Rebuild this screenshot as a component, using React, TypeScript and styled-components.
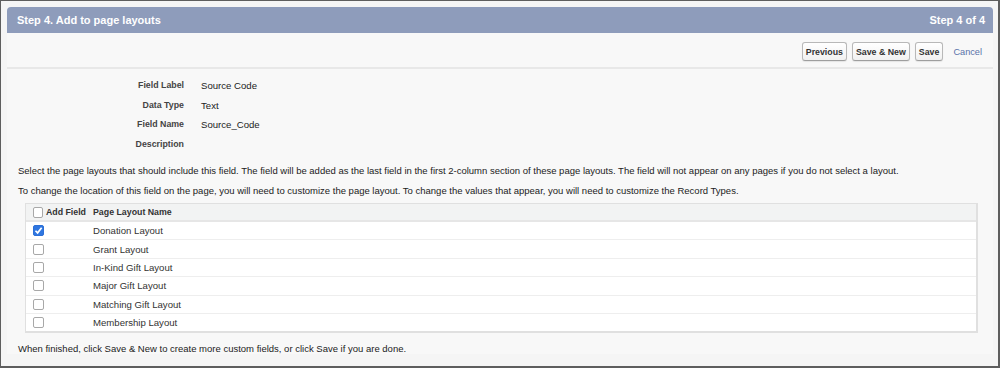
import React from "react";
import styled, { createGlobalStyle } from "styled-components";

const GlobalStyle = createGlobalStyle`
  html, body {
    margin: 0;
    padding: 0;
    background: #f5f5f5;
  }
  body {
    font-family: Arial, "Liberation Sans", Helvetica, sans-serif;
    color: #222;
  }
`;

const Frame = styled.div`
  width: 1000px;
  height: 368px;
  box-sizing: border-box;
  border: 1px solid #5e5e5e;
  border-right-width: 2px;
  border-bottom-width: 2px;
  background: #f5f5f5;
  padding: 6px 5px 0 6px;
  overflow: hidden;
`;

const Panel = styled.div`
  background: #f8f8f8;
  border-radius: 4px 4px 0 0;
`;

const Header = styled.div`
  height: 26px;
  display: flex;
  align-items: center;
  justify-content: space-between;
  padding: 0 8px 0 10px;
  background: #8e9cbb;
  border-radius: 4px 4px 0 0;
  color: #fff;
  font-size: 11px;
  font-weight: bold;
`;

const ButtonBar = styled.div`
  display: flex;
  justify-content: flex-end;
  align-items: center;
  gap: 5px;
  padding: 9px 11px 6px;
  border-bottom: 2px solid #e8e8e8;
`;

const Button = styled.button`
  height: 19px;
  padding: 0 3px;
  font-family: Arial, "Liberation Sans", sans-serif;
  font-size: 8.8px;
  font-weight: bold;
  color: #333;
  background: linear-gradient(#ffffff, #f1f1f1);
  border: 1px solid #b8b8b8;
  border-bottom-color: #9e9e9e;
  border-radius: 3px;
  box-shadow: 0 1px 1px rgba(0, 0, 0, 0.08);
`;

const CancelLink = styled.a`
  margin-left: 5px;
  font-size: 9.2px;
  color: #5872a8;
  text-decoration: none;
`;

const FieldGrid = styled.div`
  display: grid;
  grid-template-columns: 177px 1fr;
  column-gap: 17px;
  padding: 7px 0 7px;
`;

const FieldLabel = styled.div`
  height: 19.5px;
  line-height: 19.5px;
  text-align: right;
  font-size: 8.8px;
  font-weight: bold;
  color: #444;
`;

const FieldValue = styled.div`
  height: 19.5px;
  line-height: 19.5px;
  font-size: 9.6px;
  color: #222;
`;

const Body = styled.div`
  padding: 0 0 0 11px;
`;

const Note = styled.p`
  margin: 0;
  height: 20px;
  line-height: 20px;
  font-size: 9.5px;
  color: #222;
`;

const Table = styled.div`
  margin: 2px 15px 0 7px;
  background: #fff;
  border: 1px solid #e0e0e0;
  border-right-width: 2px;
  border-bottom-width: 2px;
`;

const Row = styled.div<{ head?: boolean }>`
  display: grid;
  grid-template-columns: 60px 1fr;
  align-items: center;
  height: ${(p) => (p.head ? "16px" : "17.4px")};
  background: ${(p) => (p.head ? "#f2f3f3" : "#fff")};
  border-bottom: ${(p) => (p.head ? "2px solid #e6e6e6" : "1px solid #eeeeee")};
  &:last-child {
    border-bottom: none;
  }
`;

const CheckCell = styled.div`
  display: flex;
  align-items: center;
  gap: 3px;
  padding-left: 7px;
  white-space: nowrap;
  font-size: 8.8px;
  font-weight: bold;
  color: #333;
`;

const Box = styled.span<{ checked?: boolean }>`
  width: 11px;
  height: 11px;
  box-sizing: border-box;
  border-radius: 2px;
  border: 1px solid ${(p) => (p.checked ? "#2c6fd6" : "#a8a8a8")};
  background: ${(p) => (p.checked ? "#2f76e0" : "#fff")};
  display: inline-flex;
  align-items: center;
  justify-content: center;
`;

const NameCell = styled.div<{ head?: boolean }>`
  font-size: ${(p) => (p.head ? "8.8px" : "9.6px")};
  font-weight: ${(p) => (p.head ? "bold" : "normal")};
  color: #333;
  padding-left: 7px;
`;

const Footer = styled.p`
  margin: 0;
  padding: 10px 0 0 0;
  font-size: 9.5px;
  color: #222;
`;

const Checkbox = ({ checked }: { checked?: boolean }) => (
  <Box checked={checked}>
    {checked && (
      <svg width="9" height="9" viewBox="0 0 8 8">
        <path d="M1.3 4.2 L3.2 6.1 L6.8 1.6" fill="none" stroke="#fff" strokeWidth="1.5" />
      </svg>
    )}
  </Box>
);

const fields = [
  { label: "Field Label", value: "Source Code" },
  { label: "Data Type", value: "Text" },
  { label: "Field Name", value: "Source_Code" },
  { label: "Description", value: "" },
];

const layouts = [
  { name: "Donation Layout", checked: true },
  { name: "Grant Layout", checked: false },
  { name: "In-Kind Gift Layout", checked: false },
  { name: "Major Gift Layout", checked: false },
  { name: "Matching Gift Layout", checked: false },
  { name: "Membership Layout", checked: false },
];

export default function App() {
  return (
    <>
      <GlobalStyle />
      <Frame>
        <Panel>
          <Header>
            <span>Step 4. Add to page layouts</span>
            <span>Step 4 of 4</span>
          </Header>
          <ButtonBar>
            <Button>Previous</Button>
            <Button>Save &amp; New</Button>
            <Button>Save</Button>
            <CancelLink href="#">Cancel</CancelLink>
          </ButtonBar>
          <FieldGrid>
            {fields.map((f) => (
              <React.Fragment key={f.label}>
                <FieldLabel>{f.label}</FieldLabel>
                <FieldValue>{f.value}</FieldValue>
              </React.Fragment>
            ))}
          </FieldGrid>
          <Body>
            <Note>
              Select the page layouts that should include this field. The field will be added as the last field in the first
              2-column section of these page layouts. The field will not appear on any pages if you do not select a layout.
            </Note>
            <Note>
              To change the location of this field on the page, you will need to customize the page layout. To change the
              values that appear, you will need to customize the Record Types.
            </Note>
            <Table>
              <Row head>
                <CheckCell>
                  <Checkbox />
                  Add Field
                </CheckCell>
                <NameCell head>Page Layout Name</NameCell>
              </Row>
              {layouts.map((l) => (
                <Row key={l.name}>
                  <CheckCell>
                    <Checkbox checked={l.checked} />
                  </CheckCell>
                  <NameCell>{l.name}</NameCell>
                </Row>
              ))}
            </Table>
            <Footer>When finished, click Save &amp; New to create more custom fields, or click Save if you are done.</Footer>
          </Body>
        </Panel>
      </Frame>
    </>
  );
}
